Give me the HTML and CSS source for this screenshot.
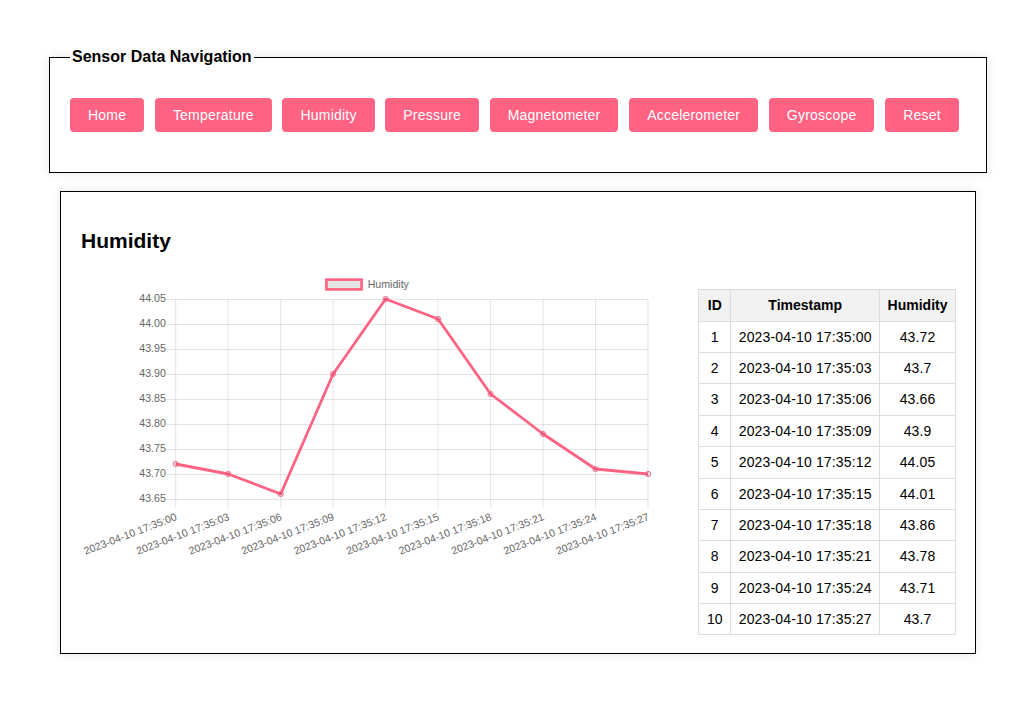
FILE: index.html
```html
<!DOCTYPE html>
<html lang="en">
<head>
<meta charset="utf-8">
<title>Sensor Data</title>
<link rel="stylesheet" href="styles.css">
</head>
<body>
<div class="page">
  <fieldset class="nav">
    <legend>Sensor Data Navigation</legend>
    <div class="buttons">
      <button class="btn">Home</button>
      <button class="btn">Temperature</button>
      <button class="btn">Humidity</button>
      <button class="btn">Pressure</button>
      <button class="btn">Magnetometer</button>
      <button class="btn">Accelerometer</button>
      <button class="btn">Gyroscope</button>
      <button class="btn">Reset</button>
    </div>
  </fieldset>

  <section class="card">
    <h2 class="title">Humidity</h2>
    <div class="content">
      <svg class="chart" width="580" height="300" viewBox="81 271 580 300" xmlns="http://www.w3.org/2000/svg">
        <g class="legend">
          <rect x="326.4" y="280.6" width="35.2" height="9.8" fill="rgba(0,0,0,0.1)" stroke="#ff6384" stroke-width="2.65"/>
          <text x="367.7" y="285.8" class="lbl" dominant-baseline="middle">Humidity</text>
        </g>
        <g class="grid" stroke="rgba(0,0,0,0.1)" stroke-width="1">
          <line x1="166.8" y1="300.5" x2="648" y2="300.5"/>
          <line x1="166.8" y1="325.5" x2="648" y2="325.5"/>
          <line x1="166.8" y1="350.5" x2="648" y2="350.5"/>
          <line x1="166.8" y1="375.5" x2="648" y2="375.5"/>
          <line x1="166.8" y1="400.5" x2="648" y2="400.5"/>
          <line x1="166.8" y1="425.5" x2="648" y2="425.5"/>
          <line x1="166.8" y1="450.5" x2="648" y2="450.5"/>
          <line x1="166.8" y1="475.5" x2="648" y2="475.5"/>
          <line x1="166.8" y1="500.5" x2="648" y2="500.5"/>
          <line x1="175.7" y1="300" x2="175.7" y2="509"/>
          <line x1="228.2" y1="300" x2="228.2" y2="509"/>
          <line x1="280.7" y1="300" x2="280.7" y2="509"/>
          <line x1="333.1" y1="300" x2="333.1" y2="509"/>
          <line x1="385.6" y1="300" x2="385.6" y2="509"/>
          <line x1="438.1" y1="300" x2="438.1" y2="509"/>
          <line x1="490.6" y1="300" x2="490.6" y2="509"/>
          <line x1="543.1" y1="300" x2="543.1" y2="509"/>
          <line x1="595.5" y1="300" x2="595.5" y2="509"/>
          <line x1="648" y1="300" x2="648" y2="509"/>
        </g>
        <g class="lbl" text-anchor="end" dominant-baseline="middle">
          <text x="165.8" y="300">44.05</text>
          <text x="165.8" y="325">44.00</text>
          <text x="165.8" y="350">43.95</text>
          <text x="165.8" y="375">43.90</text>
          <text x="165.8" y="400">43.85</text>
          <text x="165.8" y="425">43.80</text>
          <text x="165.8" y="450">43.75</text>
          <text x="165.8" y="475">43.70</text>
          <text x="165.8" y="500">43.65</text>
        </g>
        <g class="lbl" text-anchor="end" dominant-baseline="middle">
          <text transform="translate(176.4 518) rotate(-21)">2023-04-10 17:35:00</text>
          <text transform="translate(228.9 518) rotate(-21)">2023-04-10 17:35:03</text>
          <text transform="translate(281.4 518) rotate(-21)">2023-04-10 17:35:06</text>
          <text transform="translate(333.8 518) rotate(-21)">2023-04-10 17:35:09</text>
          <text transform="translate(386.3 518) rotate(-21)">2023-04-10 17:35:12</text>
          <text transform="translate(438.8 518) rotate(-21)">2023-04-10 17:35:15</text>
          <text transform="translate(491.3 518) rotate(-21)">2023-04-10 17:35:18</text>
          <text transform="translate(543.8 518) rotate(-21)">2023-04-10 17:35:21</text>
          <text transform="translate(596.2 518) rotate(-21)">2023-04-10 17:35:24</text>
          <text transform="translate(648.7 518) rotate(-21)">2023-04-10 17:35:27</text>
        </g>
        <polyline fill="none" stroke="#ff6384" stroke-width="2.8" stroke-linejoin="round"
          points="175.7,465 228.2,475 280.7,495 333.1,375 385.6,300 438.1,320 490.6,395 543.1,435 595.5,470 648,475"/>
        <g fill="rgba(0,0,0,0.1)" stroke="#ff6384" stroke-width="0.9">
          <circle cx="175.7" cy="465" r="2.65"/>
          <circle cx="228.2" cy="475" r="2.65"/>
          <circle cx="280.7" cy="495" r="2.65"/>
          <circle cx="333.1" cy="375" r="2.65"/>
          <circle cx="385.6" cy="300" r="2.65"/>
          <circle cx="438.1" cy="320" r="2.65"/>
          <circle cx="490.6" cy="395" r="2.65"/>
          <circle cx="543.1" cy="435" r="2.65"/>
          <circle cx="595.5" cy="470" r="2.65"/>
          <circle cx="648" cy="475" r="2.65"/>
        </g>
      </svg>

      <table class="data">
        <thead>
          <tr><th>ID</th><th>Timestamp</th><th>Humidity</th></tr>
        </thead>
        <tbody>
          <tr><td>1</td><td>2023-04-10 17:35:00</td><td>43.72</td></tr>
          <tr><td>2</td><td>2023-04-10 17:35:03</td><td>43.7</td></tr>
          <tr><td>3</td><td>2023-04-10 17:35:06</td><td>43.66</td></tr>
          <tr><td>4</td><td>2023-04-10 17:35:09</td><td>43.9</td></tr>
          <tr><td>5</td><td>2023-04-10 17:35:12</td><td>44.05</td></tr>
          <tr><td>6</td><td>2023-04-10 17:35:15</td><td>44.01</td></tr>
          <tr><td>7</td><td>2023-04-10 17:35:18</td><td>43.86</td></tr>
          <tr><td>8</td><td>2023-04-10 17:35:21</td><td>43.78</td></tr>
          <tr><td>9</td><td>2023-04-10 17:35:24</td><td>43.71</td></tr>
          <tr><td>10</td><td>2023-04-10 17:35:27</td><td>43.7</td></tr>
        </tbody>
      </table>
    </div>
  </section>
</div>
</body>
</html>
```

FILE: styles.css
```css
html, body {
  margin: 0;
  background: #fff;
}

body {
  font-family: "Liberation Sans", Arial, sans-serif;
  color: #000;
}

.page {
  padding: 48px 37px 40px 49px;
}

.nav {
  margin: 0;
  min-width: 0;
  border: 1px solid #000;
  padding: 31.6px 20px 40px;
  box-shadow: 0 0 10px rgba(0, 0, 0, 0.1);
}

.nav legend {
  font-size: 16px;
  font-weight: bold;
  padding: 0 2px;
}

.buttons {
  display: flex;
  gap: 10.7px;
}

.btn {
  border: none;
  border-radius: 4px;
  background: #ff6384;
  color: #fff;
  font-family: "Liberation Sans", Arial, sans-serif;
  font-size: 14px;
  letter-spacing: 0.21px;
  line-height: 16px;
  padding: 9px 18px;
  margin: 0;
}

.card {
  margin: 18px 11px 0;
  border: 1px solid #000;
  padding: 20px 19px 18px 20px;
  box-shadow: 0 0 10px rgba(0, 0, 0, 0.1);
}

.title {
  font-size: 21px;
  font-weight: bold;
  margin: 0.83em 0;
}

.content {
  display: flex;
  justify-content: space-between;
  align-items: flex-start;
}

.chart {
  display: block;
  flex: none;
}

.lbl {
  font-family: "Liberation Sans", Arial, sans-serif;
  font-size: 10.6px;
  fill: #666;
}

.data {
  margin-top: 19px;
  border-collapse: collapse;
  font-size: 14px;
}

.data th,
.data td {
  border: 1px solid #ddd;
  padding: 7px 7.5px;
  line-height: 16.35px;
  text-align: center;
}

.data td {
  letter-spacing: 0.15px;
}

.data th {
  background: #f2f2f2;
  font-weight: bold;
}
```
